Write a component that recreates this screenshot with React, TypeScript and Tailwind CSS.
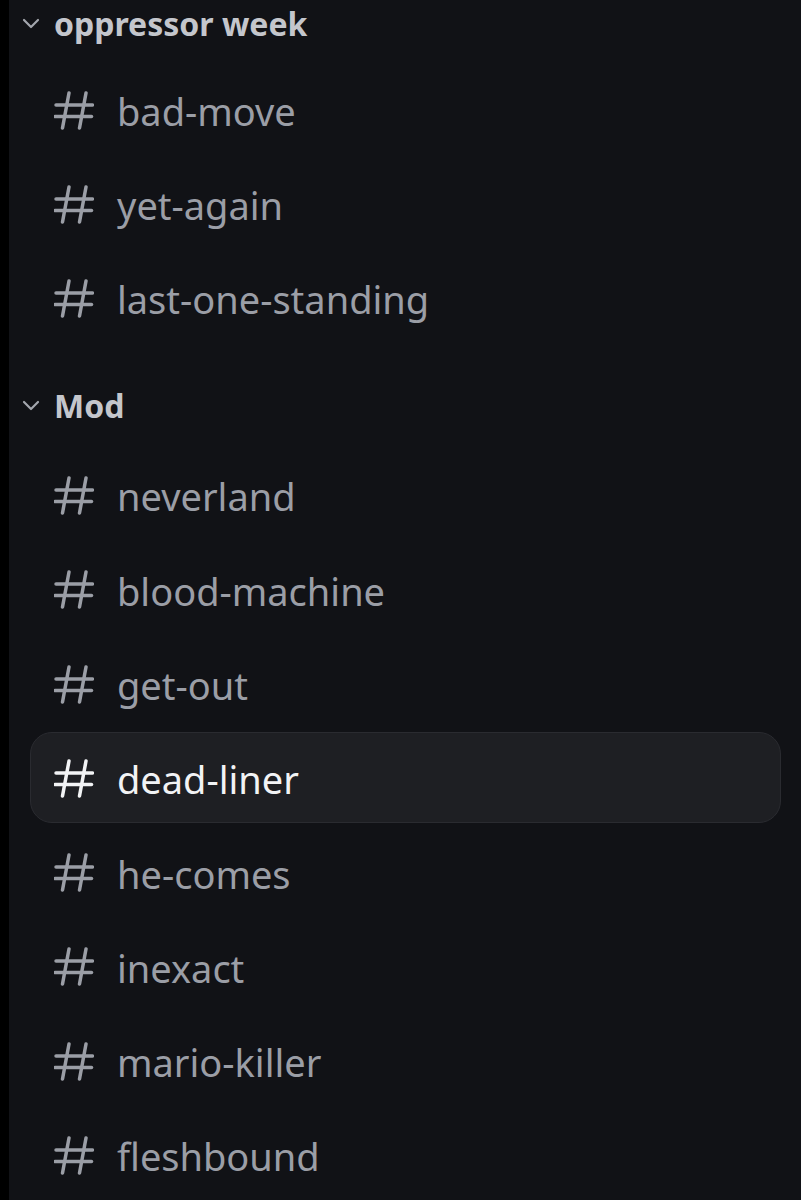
import React from "react";

const Hash = ({ color }: { color: string }) => (
  <svg width="40" height="39" viewBox="0 0 40 39" fill="none" stroke={color} strokeWidth="3.5" strokeLinecap="round">
    <line x1="15" y1="2" x2="8.5" y2="37" />
    <line x1="32" y1="2" x2="25.5" y2="37" />
    <line x1="2" y1="14" x2="38.5" y2="14" />
    <line x1="1" y1="25.5" x2="37.5" y2="25.5" />
  </svg>
);

const Chevron = () => (
  <svg width="20" height="12" viewBox="0 0 20 12" fill="none" stroke="#a3a6ad" strokeWidth="2.2" strokeLinecap="round" strokeLinejoin="round">
    <polyline points="3,2 10,9 17,2" />
  </svg>
);

const Header = ({ title, className }: { title: string; className?: string }) => (
  <div className={`flex h-[50px] items-center pl-[12px] ${className ?? ""}`}>
    <Chevron />
    <span className="ml-[13px] text-[32px] font-bold leading-none text-[#c4c6cc]">{title}</span>
  </div>
);

const Channel = ({ name, active }: { name: string; active?: boolean }) => (
  <div
    className={`ml-[21px] mr-[20px] flex h-[91px] items-center rounded-[22px] pl-[23px] ${
      active ? "border border-[#2a2b30] bg-[#1e1f23]" : "border border-transparent"
    }`}
  >
    <div className="pt-[2px]">
      <Hash color={active ? "#f2f3f5" : "#9b9ea6"} />
    </div>
    <span
      className={`ml-[23px] pt-[4px] text-[38px] leading-none ${active ? "text-[#f2f3f5]" : "text-[#9b9ea6]"}`}
    >
      {name}
    </span>
  </div>
);

export default function App() {
  const first = ["bad-move", "yet-again", "last-one-standing"];
  const second = ["neverland", "blood-machine", "get-out", "dead-liner", "he-comes", "inexact", "mario-killer", "fleshbound"];
  return (
    <div className="flex h-[1200px] w-[801px] overflow-hidden bg-black" style={{ fontFamily: '"Noto Sans", "Open Sans", sans-serif' }}>
      <div className="w-[9px] shrink-0 bg-black" />
      <div className="flex flex-1 flex-col bg-[#111216] pt-[4px]">
        <Header title="oppressor week" />
        <div className="mt-[20px] flex flex-col gap-[3px]">
          {first.map((n) => (
            <Channel key={n} name={n} />
          ))}
        </div>
        <Header title="Mod" className="mt-[43px]" />
        <div className="mt-[23px] flex flex-col gap-[3.3px]">
          {second.map((n) => (
            <Channel key={n} name={n} active={n === "dead-liner"} />
          ))}
        </div>
      </div>
    </div>
  );
}
